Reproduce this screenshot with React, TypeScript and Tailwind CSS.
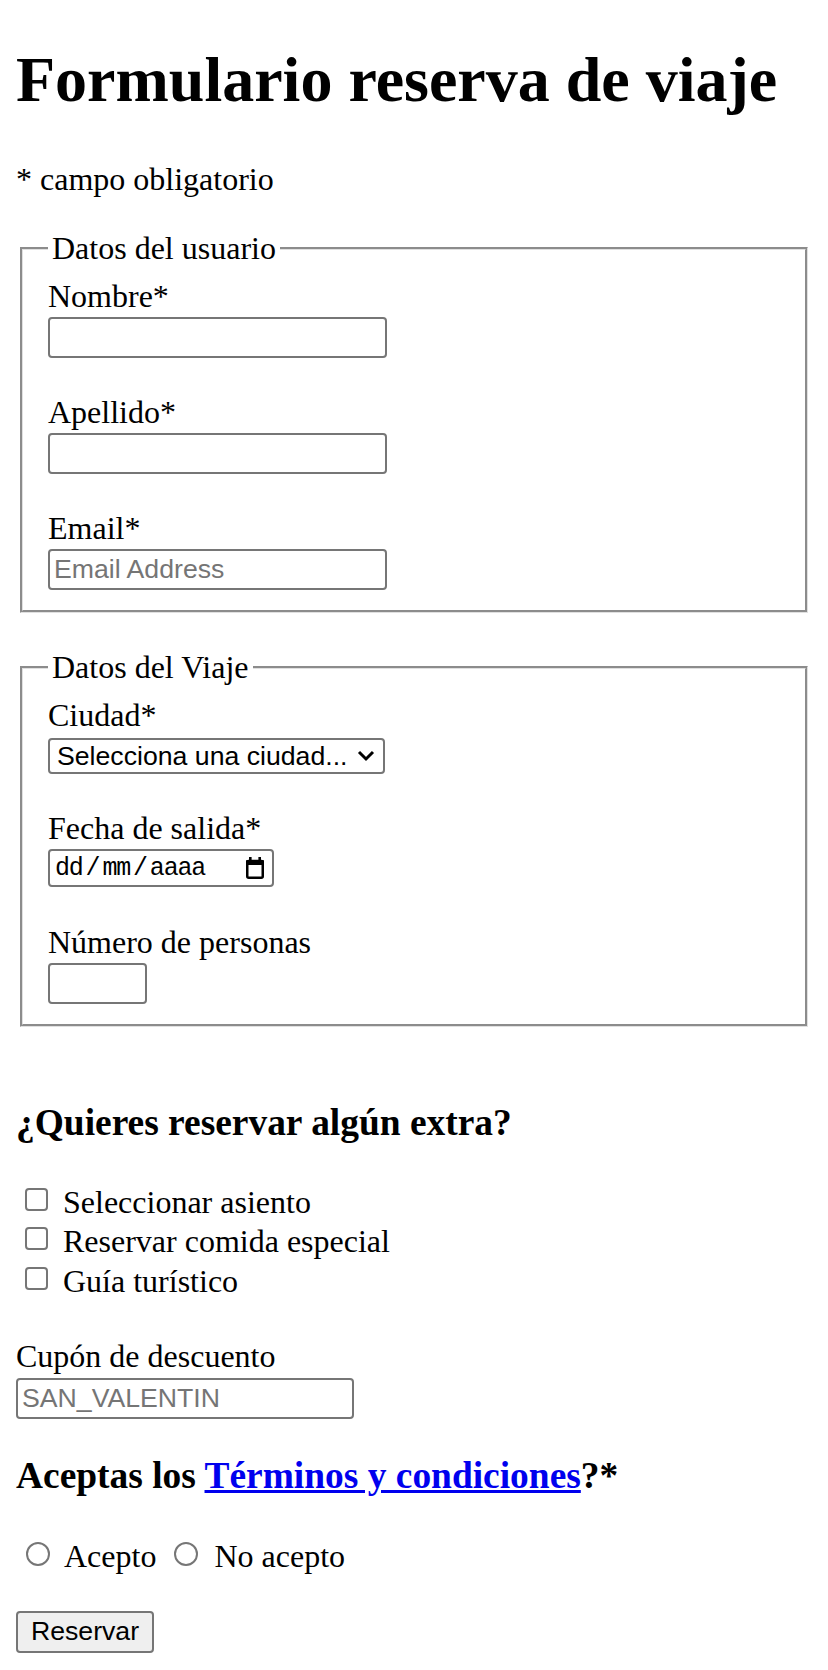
const serif = "font-['Liberation_Serif','Times_New_Roman',serif]";
const sans = "font-['Liberation_Sans',Arial,sans-serif]";

const textInput = `mt-[2px] h-[41px] w-[339px] rounded-[4px] border-2 border-[#767676] bg-white px-[4px] ${sans} text-[26.67px] text-black outline-none placeholder:text-[#757575]`;

const fieldset =
  "mx-[4px] self-stretch border-[3px] [border-style:groove] border-[#e0e0e0] pb-[20px] pl-[25px] pr-[24px] pt-[11px]";

function CalendarIcon() {
  return (
    <svg width="18" height="22" viewBox="0 0 18 22" className="text-black">
      <rect x="1.25" y="4" width="15.5" height="16.75" rx="1.5" fill="none" stroke="currentColor" strokeWidth="2.5" />
      <rect x="0" y="3" width="18" height="5" rx="1" fill="currentColor" />
      <rect x="3" y="0" width="2.6" height="4" fill="currentColor" />
      <rect x="12.4" y="0" width="2.6" height="4" fill="currentColor" />
    </svg>
  );
}

function Checkbox({ label }: { label: string }) {
  return (
    <label className="flex items-start leading-[39.3px]">
      <input
        type="checkbox"
        className="ml-[9px] mt-[5px] h-[23px] w-[23px] appearance-none rounded-[4px] border-2 border-[#767676] bg-white"
      />
      <span className="ml-[15px]">{label}</span>
    </label>
  );
}

export default function App() {
  return (
    <div className={`min-h-screen bg-white px-[16px] pb-[16px] ${serif} text-[32px] leading-[normal] text-black`}>
      <div className="flex flex-col items-start">
        <h1 className="mt-[43px] text-[64px] font-bold">Formulario reserva de viaje</h1>
        <p className="mt-[44px]">* campo obligatorio</p>

        <form className="flex flex-col items-start self-stretch">
          <fieldset className={`mt-[32px] ${fieldset}`}>
            <legend className="px-[4px]">Datos del usuario</legend>
            <div className="flex flex-col items-start">
              <label htmlFor="nombre">Nombre*</label>
              <input id="nombre" type="text" className={textInput} />
              <label htmlFor="apellido" className="mt-[36px]">Apellido*</label>
              <input id="apellido" type="text" className={textInput} />
              <label htmlFor="email" className="mt-[36px]">Email*</label>
              <input id="email" type="email" placeholder="Email Address" className={textInput} />
            </div>
          </fieldset>

          <fieldset className={`mt-[36px] ${fieldset}`}>
            <legend className="px-[4px]">Datos del Viaje</legend>
            <div className="flex flex-col items-start">
              <label htmlFor="ciudad">Ciudad*</label>
              <div className="relative mt-[4px] flex">
                <select
                  id="ciudad"
                  className={`block h-[36px] w-[337px] appearance-none rounded-[4px] border-2 border-[#767676] bg-white pl-[7px] ${sans} text-[26.67px] text-black outline-none`}
                >
                  <option>Selecciona una ciudad...</option>
                </select>
                <svg
                  width="18"
                  height="12"
                  viewBox="0 0 18 12"
                  className="pointer-events-none absolute right-[10px] top-1/2 -translate-y-1/2"
                >
                  <polyline points="2,2 9,9 16,2" fill="none" stroke="black" strokeWidth="3" />
                </svg>
              </div>

              <label className="mt-[36px]">Fecha de salida*</label>
              <div className="mt-[2px] flex h-[38px] w-[226px] items-center justify-between rounded-[4px] border-2 border-[#767676] bg-white pl-[5px] pr-[8px]">
                <span className="flex font-['Liberation_Mono','DejaVu_Sans_Mono',monospace] text-[25px] tracking-[-1.2px] text-black">
                  <span>dd</span>
                  <span className="mx-[3px]">/</span>
                  <span>mm</span>
                  <span className="mx-[3px]">/</span>
                  <span>aaaa</span>
                </span>
                <CalendarIcon />
              </div>

              <label htmlFor="personas" className="mt-[37px]">Número de personas</label>
              <input
                id="personas"
                type="number"
                className={`mt-[2px] h-[41px] w-[99px] rounded-[4px] border-2 border-[#767676] bg-white px-[4px] ${sans} text-[26.67px] outline-none`}
              />
            </div>
          </fieldset>

          <h3 className="mt-[74px] text-[37.44px] font-bold">¿Quieres reservar algún extra?</h3>

          <div className="mt-[39px] flex flex-col">
            <Checkbox label="Seleccionar asiento" />
            <Checkbox label="Reservar comida especial" />
            <Checkbox label="Guía turístico" />
          </div>

          <label htmlFor="cupon" className="mt-[37px]">Cupón de descuento</label>
          <input id="cupon" type="text" placeholder="SAN_VALENTIN" className={`mt-[3px] h-[41px] w-[338px] rounded-[4px] border-2 border-[#767676] bg-white px-[4px] ${sans} text-[26.67px] text-black outline-none placeholder:text-[#757575]`} />

          <h3 className="mt-[35px] text-[37.44px] font-bold">
            Aceptas los{" "}
            <a href="#" className="text-[#0000ee] underline">
              Términos y condiciones
            </a>
            ?*
          </h3>

          <div className="mt-[41px] flex items-start">
            <input
              type="radio"
              name="terminos"
              className="ml-[10px] mt-[4.5px] h-[24px] w-[24px] appearance-none rounded-full border-2 border-[#767676] bg-white"
            />
            <span className="ml-[14px]">Acepto</span>
            <input
              type="radio"
              name="terminos"
              className="ml-[18px] mt-[4.5px] h-[24px] w-[24px] appearance-none rounded-full border-2 border-[#767676] bg-white"
            />
            <span className="ml-[16px]">No acepto</span>
          </div>

          <button
            type="button"
            className={`mt-[36px] h-[42px] w-[138px] rounded-[4px] border-2 border-[#767676] bg-[#efefef] ${sans} text-[26.67px] text-black`}
          >
            Reservar
          </button>
        </form>
      </div>
    </div>
  );
}
